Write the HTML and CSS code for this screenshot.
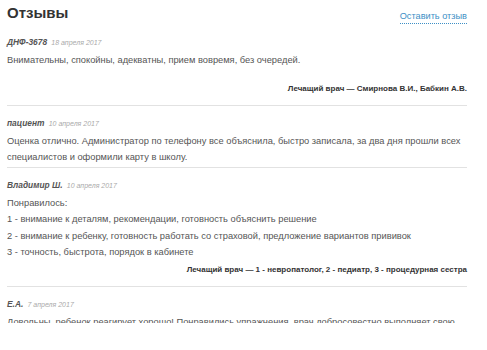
FILE: index.html
```html
<!DOCTYPE html>
<html lang="ru">
<head>
    <meta charset="UTF-8">
    <meta name="viewport" content="width=device-width, initial-scale=1.0">
    <title>Отзывы</title>
    <link rel="stylesheet" href="styles.css">
</head>
<body>
    <div id="reviews">
        <div class="head">
            <h2 class="title">Отзывы</h2>
            <a class="add-link" href="#">Оставить отзыв</a>
        </div>

        <div class="review">
            <div class="meta"><span class="author">ДНФ-3678</span> <span class="date">18 апреля 2017</span></div>
            <div class="text spaced">Внимательны, спокойны, адекватны, прием вовремя, без очередей.</div>
            <div class="doctor">Лечащий врач — Смирнова В.И., Бабкин А.В.</div>
        </div>

        <div class="review">
            <div class="meta"><span class="author">пациент</span> <span class="date">10 апреля 2017</span></div>
            <div class="text">Оценка отлично. Администратор по телефону все объяснила, быстро записала, за два дня прошли всех специалистов и оформили карту в школу.</div>
        </div>

        <div class="review">
            <div class="meta"><span class="author">Владимир Ш.</span> <span class="date">10 апреля 2017</span></div>
            <div class="text">
                Понравилось:<br>
                1 - внимание к деталям, рекомендации, готовность объяснить решение<br>
                2 - внимание к ребенку, готовность работать со страховой, предложение вариантов прививок<br>
                3 - точность, быстрота, порядок в кабинете
            </div>
            <div class="doctor">Лечащий врач — 1 - невропатолог, 2 - педиатр, 3 - процедурная сестра</div>
        </div>

        <div class="review">
            <div class="meta"><span class="author">Е.А.</span> <span class="date">7 апреля 2017</span></div>
            <div class="text">Довольны, ребенок реагирует хорошо! Понравились упражнения, врач добросовестно выполняет свою работу.</div>
        </div>
    </div>
</body>
</html>
```

FILE: styles.css
```css
body {
    margin: 0;
    background: white;
    font-family: 'Liberation Sans', Arial, sans-serif;
}

#reviews {
    height: 323px;
    overflow: hidden;
    padding: 0 20px 0 7px;
}

.head {
    display: flex;
    justify-content: space-between;
    align-items: flex-start;
    padding-top: 3px;
    padding-bottom: 10px;
}

.title {
    margin: 0;
    font-size: 15px;
    line-height: 20px;
    font-weight: bold;
    color: #333;
}

.add-link {
    margin-top: 7px;
    font-size: 9.2px;
    line-height: 13px;
    color: #3d8fc6;
    text-decoration: none;
    border-bottom: 1px dotted #3d8fc6;
}

/* One review block */
.review {
    padding: 9px 0 1px;
    border-bottom: 1px solid #e2e2e2;
}

.head + .review {
    padding-top: 0;
}

.meta {
    font-size: 8px;
    line-height: 16px;
    margin-bottom: 1px;
}

.author {
    font-size: 8.4px;
    font-weight: bold;
    font-style: italic;
    color: #555;
}

.date {
    margin-left: 2px;
    font-size: 7px;
    font-style: italic;
    color: #aaa;
}

.text {
    font-size: 9.3px;
    line-height: 16.5px;
    color: #555;
}

.text.spaced {
    margin-bottom: 11px;
}

.doctor {
    text-align: right;
    font-size: 8px;
    font-weight: bold;
    line-height: 17px;
    color: #333;
    margin-bottom: 7px;
}
```
